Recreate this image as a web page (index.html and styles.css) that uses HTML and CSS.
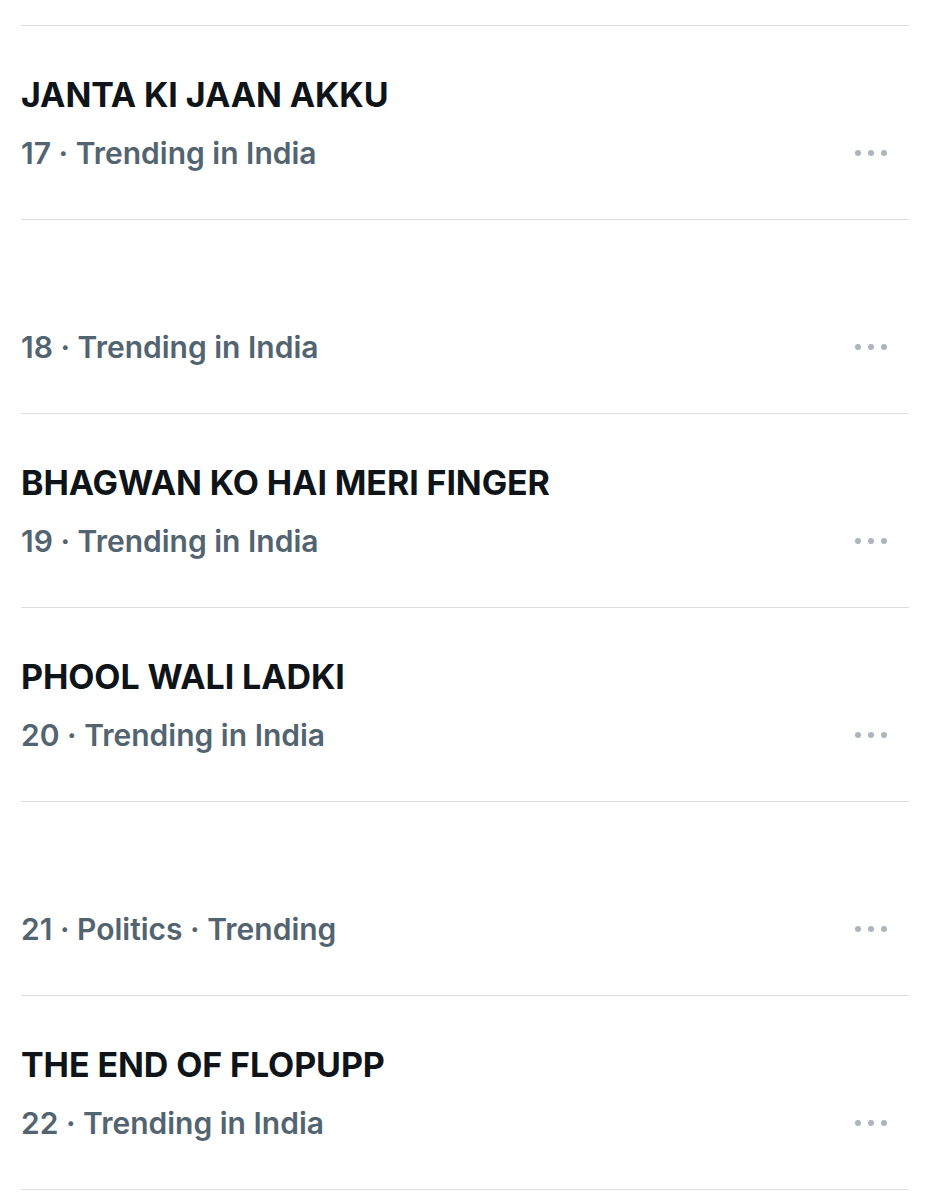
FILE: index.html
```html
<!DOCTYPE html>
<html lang="en">
<head>
  <meta charset="UTF-8" />
  <meta name="viewport" content="width=device-width, initial-scale=1.0"/>
  <title>Trending</title>
  <link rel="stylesheet" href="styles.css">
</head>
<body>
  <div class="trends">
    <div class="trend">
      <div class="trend-title">JANTA KI JAAN AKKU</div>
      <div class="trend-meta"><span>17 · Trending in India</span><span class="more"><i></i><i></i><i></i></span></div>
    </div>
    <div class="trend">
      <div class="trend-title"></div>
      <div class="trend-meta"><span>18 · Trending in India</span><span class="more"><i></i><i></i><i></i></span></div>
    </div>
    <div class="trend">
      <div class="trend-title">BHAGWAN KO HAI MERI FINGER</div>
      <div class="trend-meta"><span>19 · Trending in India</span><span class="more"><i></i><i></i><i></i></span></div>
    </div>
    <div class="trend">
      <div class="trend-title">PHOOL WALI LADKI</div>
      <div class="trend-meta"><span>20 · Trending in India</span><span class="more"><i></i><i></i><i></i></span></div>
    </div>
    <div class="trend">
      <div class="trend-title"></div>
      <div class="trend-meta"><span>21 · Politics · Trending</span><span class="more"><i></i><i></i><i></i></span></div>
    </div>
    <div class="trend">
      <div class="trend-title">THE END OF FLOPUPP</div>
      <div class="trend-meta"><span>22 · Trending in India</span><span class="more"><i></i><i></i><i></i></span></div>
    </div>
  </div>
</body>
</html>
```

FILE: styles.css
```css
body { margin: 0; background: #fff; font-family: Inter, "Noto Sans", sans-serif; }
.trends { margin: 25px 21px 0 21px; border-top: 1px solid #dcdfe2; }
.trend {
  height: 146px;
  border-bottom: 1px solid #dcdfe2;
  padding-top: 47px;
}
.trend-title {
  height: 44px;
  line-height: 44px;
  font-size: 34px;
  font-weight: 700;
  letter-spacing: -0.1px;
  color: #0f1419;
}
.trend-meta {
  margin-top: 16px;
  display: flex;
  justify-content: space-between;
  align-items: center;
  line-height: 40px;
  font-size: 30px;
  font-weight: 600;
  color: #536471;
  padding-right: 22px;
}
.more { display: flex; gap: 7px; }
.more i { width: 6px; height: 6px; border-radius: 50%; background: #aab5bd; }
```
